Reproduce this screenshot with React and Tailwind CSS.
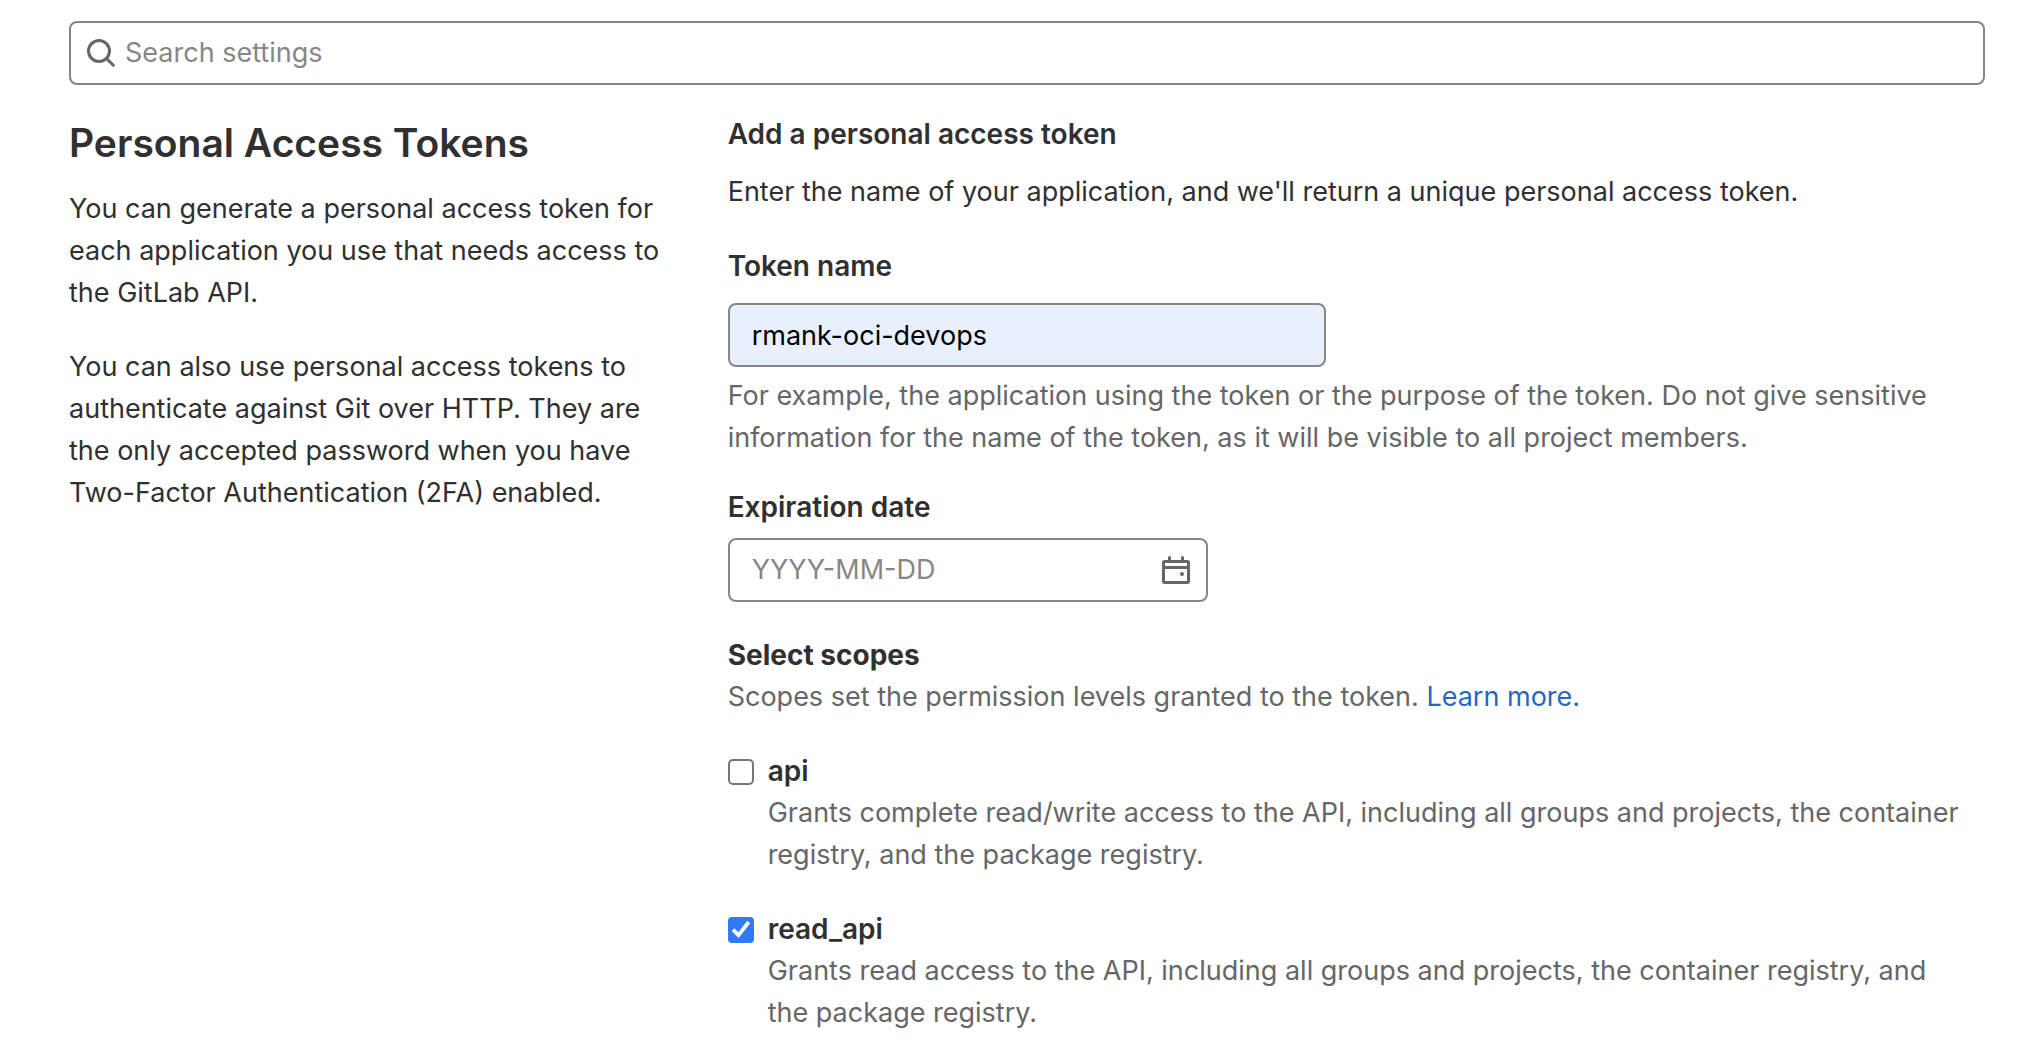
import { useState } from "react";

const scopes = [
  {
    id: "api",
    description:
      "Grants complete read/write access to the API, including all groups and projects, the container registry, and the package registry.",
    checked: false,
  },
  {
    id: "read_api",
    description:
      "Grants read access to the API, including all groups and projects, the container registry, and the package registry.",
    checked: true,
  },
];

function SearchIcon() {
  return (
    <svg viewBox="0 0 28 28" className="size-7 shrink-0" fill="none" stroke="#666" aria-hidden="true">
      <circle cx="12" cy="12" r="10.5" strokeWidth="3" />
      <path d="M19.5 19.5l6.800 6.800" strokeWidth="3" strokeLinecap="round" />
    </svg>
  );
}

function CalendarIcon() {
  return (
    <svg viewBox="0 0 28 28" className="size-7" fill="none" stroke="#666" aria-hidden="true">
      <rect x="1.500" y="5.500" width="25" height="21" rx="1" strokeWidth="3" />
      <path d="M1.500 11.500h25" strokeWidth="3" />
      <path d="M7.500 1.500v3M20.500 1.500v3" strokeWidth="3" strokeLinecap="round" />
      <circle cx="20" cy="18" r="2" fill="#666" stroke="none" />
    </svg>
  );
}

function Scope({ id, description, checked }) {
  const [on, setOn] = useState(checked);
  return (
    <div className="mt-8 flex gap-[14px] pr-4">
      <span className="mt-[9px] grid size-[26px] shrink-0">
        <input
          id={id}
          type="checkbox"
          checked={on}
          onChange={(e) => setOn(e.target.checked)}
          className="peer col-start-1 row-start-1 size-[26px] appearance-none rounded-[5px] border-2 border-[#767676] bg-white checked:rounded-[4px] checked:border-[#2f7af8] checked:bg-[#2f7af8]"
        />
        <svg
          viewBox="0 0 26 26"
          className="pointer-events-none invisible col-start-1 row-start-1 size-[26px] peer-checked:visible"
          fill="none"
          stroke="white"
          strokeWidth="3.8"
          aria-hidden="true"
        >
          <path d="M5 12.700l5.500 5.500L20.700 5" />
        </svg>
      </span>
      <div>
        <label htmlFor={id} className="block text-[28px] font-semibold">
          {id}
        </label>
        <p className="text-[#666]">{description}</p>
      </div>
    </div>
  );
}

export default function App() {
  return (
    <main className="min-h-screen bg-white pt-[21px] pr-[47px] pl-[69px] font-['Inter',sans-serif] text-[27px] leading-[42px] text-[#303030]">
      <div className="flex h-16 items-center gap-[10px] rounded-lg border-2 border-[#868686] pl-4">
        <SearchIcon />
        <input
          type="search"
          aria-label="Search settings"
          placeholder="Search settings"
          className="min-w-0 flex-1 bg-transparent outline-none placeholder:text-[#868686]"
        />
      </div>

      <div className="mt-7 grid grid-cols-3 gap-x-[60px]">
        <section>
          <h1 className="mt-1 text-[39px] leading-[52px] font-semibold">Personal Access Tokens</h1>
          <p className="mt-[19px]">
            You can generate a personal access token for each application you use that needs access to the GitLab API.
          </p>
          <p className="mt-8">
            You can also use personal access tokens to authenticate against Git over HTTP. They are the only accepted
            password when you have Two-Factor Authentication (2FA) enabled.
          </p>
        </section>

        <form className="col-span-2">
          <h2 className="text-[28px] font-semibold">Add a personal access token</h2>
          <p className="mt-4">Enter the name of your application, and we'll return a unique personal access token.</p>

          <label htmlFor="token-name" className="mt-8 block text-[28px] font-semibold">
            Token name
          </label>
          <input
            id="token-name"
            type="text"
            defaultValue="rmank-oci-devops"
            className="mt-4 block h-16 w-[598px] max-w-full rounded-lg border-2 border-[#868686] bg-[#e8f0fe] px-[22px] text-black"
          />
          <p className="mt-2 text-[#666]">
            For example, the application using the token or the purpose of the token. Do not give sensitive information
            for the name of the token, as it will be visible to all project members.
          </p>

          <label htmlFor="expiration" className="mt-[27px] block text-[28px] font-semibold">
            Expiration date
          </label>
          <div className="mt-[10px] flex h-16 w-[480px] max-w-full items-center rounded-lg border-2 border-[#868686] pr-4 pl-[22px]">
            <input
              id="expiration"
              type="text"
              placeholder="YYYY-MM-DD"
              className="min-w-0 flex-1 bg-transparent outline-none placeholder:text-[#868686]"
            />
            <button type="button" aria-label="Open calendar">
              <CalendarIcon />
            </button>
          </div>

          <fieldset className="mt-8">
            <legend className="text-[28px] font-bold">Select scopes</legend>
            <p className="text-[#666]">
              Scopes set the permission levels granted to the token.{" "}
              <a href="#scopes" className="text-[#1f69c0]">
                Learn more.
              </a>
            </p>
            {scopes.map((scope) => (
              <Scope key={scope.id} {...scope} />
            ))}
          </fieldset>
        </form>
      </div>
    </main>
  );
}
